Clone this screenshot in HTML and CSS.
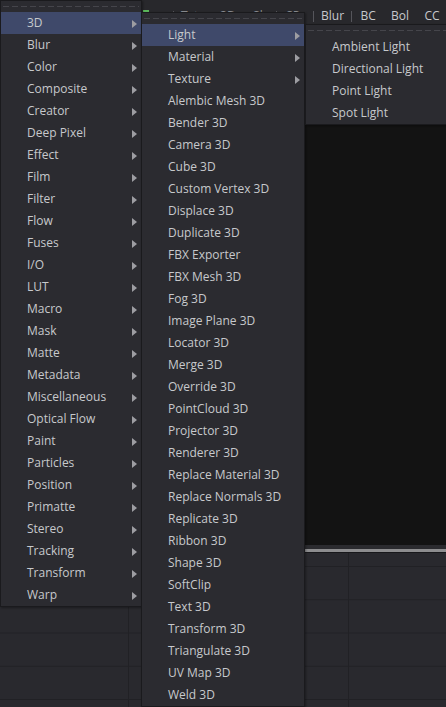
FILE: index.html
```html
<!DOCTYPE html>
<html lang="en">
<head>
<meta charset="utf-8">
<title>Fusion - Add Tool menu</title>
<link rel="stylesheet" href="styles.css">
</head>
<body>
<div class="app">
  <div class="toolbar">
    <div class="tb-hidden">
      <span class="tb-mark"></span>
      <span class="tb-sep"></span>
      <span class="tb-btn">Txt+</span>
      <span class="tb-btn">3D</span>
      <span class="tb-btn">Sh</span>
      <span class="tb-sep"></span>
      <span class="tb-btn">SP</span>
    </div>
    <span class="tb-sep"></span>
    <span class="tb-btn">Blur</span>
    <span class="tb-sep"></span>
    <span class="tb-btn">BC</span>
    <span class="tb-btn">Bol</span>
    <span class="tb-btn">CC</span>
  </div>
  <div class="viewer"></div>
  <div class="splitter"><div class="sp-a"></div><div class="sp-b"></div><div class="sp-c"></div></div>
  <div class="nodes"></div>
</div>

<div class="menu menu-main">
  <div class="tear"></div>
  <ul class="items">
    <li class="item active"><span class="label">3D</span><span class="arrow"></span></li>
    <li class="item"><span class="label">Blur</span><span class="arrow"></span></li>
    <li class="item"><span class="label">Color</span><span class="arrow"></span></li>
    <li class="item"><span class="label">Composite</span><span class="arrow"></span></li>
    <li class="item"><span class="label">Creator</span><span class="arrow"></span></li>
    <li class="item"><span class="label">Deep Pixel</span><span class="arrow"></span></li>
    <li class="item"><span class="label">Effect</span><span class="arrow"></span></li>
    <li class="item"><span class="label">Film</span><span class="arrow"></span></li>
    <li class="item"><span class="label">Filter</span><span class="arrow"></span></li>
    <li class="item"><span class="label">Flow</span><span class="arrow"></span></li>
    <li class="item"><span class="label">Fuses</span><span class="arrow"></span></li>
    <li class="item"><span class="label">I/O</span><span class="arrow"></span></li>
    <li class="item"><span class="label">LUT</span><span class="arrow"></span></li>
    <li class="item"><span class="label">Macro</span><span class="arrow"></span></li>
    <li class="item"><span class="label">Mask</span><span class="arrow"></span></li>
    <li class="item"><span class="label">Matte</span><span class="arrow"></span></li>
    <li class="item"><span class="label">Metadata</span><span class="arrow"></span></li>
    <li class="item"><span class="label">Miscellaneous</span><span class="arrow"></span></li>
    <li class="item"><span class="label">Optical Flow</span><span class="arrow"></span></li>
    <li class="item"><span class="label">Paint</span><span class="arrow"></span></li>
    <li class="item"><span class="label">Particles</span><span class="arrow"></span></li>
    <li class="item"><span class="label">Position</span><span class="arrow"></span></li>
    <li class="item"><span class="label">Primatte</span><span class="arrow"></span></li>
    <li class="item"><span class="label">Stereo</span><span class="arrow"></span></li>
    <li class="item"><span class="label">Tracking</span><span class="arrow"></span></li>
    <li class="item"><span class="label">Transform</span><span class="arrow"></span></li>
    <li class="item"><span class="label">Warp</span><span class="arrow"></span></li>
  </ul>
</div>

<div class="menu menu-3d">
  <div class="tear"></div>
  <ul class="items">
    <li class="item active"><span class="label">Light</span><span class="arrow"></span></li>
    <li class="item"><span class="label">Material</span><span class="arrow"></span></li>
    <li class="item"><span class="label">Texture</span><span class="arrow"></span></li>
    <li class="item"><span class="label">Alembic Mesh 3D</span></li>
    <li class="item"><span class="label">Bender 3D</span></li>
    <li class="item"><span class="label">Camera 3D</span></li>
    <li class="item"><span class="label">Cube 3D</span></li>
    <li class="item"><span class="label">Custom Vertex 3D</span></li>
    <li class="item"><span class="label">Displace 3D</span></li>
    <li class="item"><span class="label">Duplicate 3D</span></li>
    <li class="item"><span class="label">FBX Exporter</span></li>
    <li class="item"><span class="label">FBX Mesh 3D</span></li>
    <li class="item"><span class="label">Fog 3D</span></li>
    <li class="item"><span class="label">Image Plane 3D</span></li>
    <li class="item"><span class="label">Locator 3D</span></li>
    <li class="item"><span class="label">Merge 3D</span></li>
    <li class="item"><span class="label">Override 3D</span></li>
    <li class="item"><span class="label">PointCloud 3D</span></li>
    <li class="item"><span class="label">Projector 3D</span></li>
    <li class="item"><span class="label">Renderer 3D</span></li>
    <li class="item"><span class="label">Replace Material 3D</span></li>
    <li class="item"><span class="label">Replace Normals 3D</span></li>
    <li class="item"><span class="label">Replicate 3D</span></li>
    <li class="item"><span class="label">Ribbon 3D</span></li>
    <li class="item"><span class="label">Shape 3D</span></li>
    <li class="item"><span class="label">SoftClip</span></li>
    <li class="item"><span class="label">Text 3D</span></li>
    <li class="item"><span class="label">Transform 3D</span></li>
    <li class="item"><span class="label">Triangulate 3D</span></li>
    <li class="item"><span class="label">UV Map 3D</span></li>
    <li class="item"><span class="label">Weld 3D</span></li>
  </ul>
</div>

<div class="menu menu-light">
  <div class="tear"></div>
  <ul class="items">
    <li class="item"><span class="label">Ambient Light</span></li>
    <li class="item"><span class="label">Directional Light</span></li>
    <li class="item"><span class="label">Point Light</span></li>
    <li class="item"><span class="label">Spot Light</span></li>
  </ul>
</div>
</body>
</html>
```

FILE: styles.css
```css
* { box-sizing: border-box; }

html, body {
  margin: 0;
  padding: 0;
  width: 446px;
  height: 707px;
  overflow: hidden;
  background: #28282d;
  font-family: "Open Sans", "Noto Sans", sans-serif;
  font-size: 12px;
  color: #c7c9cc;
}

.app {
  display: flex;
  flex-direction: column;
  height: 707px;
}

/* ---- toolbar ---- */
.toolbar {
  height: 26px;
  flex: 0 0 26px;
  display: flex;
  align-items: flex-start;
  padding-top: 8px;
  background: #28282c;
  overflow: hidden;
  white-space: nowrap;
}

.tb-hidden {
  flex: 0 0 313px;
  min-width: 0;
  overflow: hidden;
  display: flex;
  align-items: flex-start;
  padding-left: 143px;
}

.tb-mark {
  flex: 0 0 6px;
  height: 2px;
  margin-top: 2px;
  margin-right: 24px;
  background: #5cb85c;
}

.tb-sep {
  flex: 0 0 1px;
  width: 1px;
  height: 11px;
  margin-top: 3px;
  background: #55555b;
}

.tb-btn {
  flex: 0 0 auto;
  min-width: 32px;
  padding: 0 7px;
  line-height: 16px;
  text-align: center;
  color: #c7c9cc;
}

.tb-hidden .tb-btn {
  color: #8a8c90;
}

.viewer {
  flex: 0 0 519px;
  background: #131313;
}

.splitter {
  flex: 0 0 8px;
  display: flex;
  flex-direction: column;
}
.sp-a { height: 4px; background: #2b2b2f; }
.sp-b { height: 3px; background: #8d8d8f; }
.sp-c { height: 1px; background: #18181b; }

.nodes {
  flex: 1 1 auto;
  background-color: #29292e;
  background-image:
    linear-gradient(to right, #212125 0, #212125 1px, transparent 1px),
    linear-gradient(to bottom, #212125 0, #212125 1px, transparent 1px);
  background-size: 55px 33.25px;
  background-position: 18px 13px;
}

/* ---- popup menus ---- */
.menu {
  position: absolute;
  background: #2b2b30;
  border: 1px solid #1a1a1d;
  box-shadow: 1px 1px 2px rgba(0, 0, 0, 0.35);
}

.menu-main  { left: 0;     top: 0;  width: 142px; }
.menu-3d    { left: 141px; top: 12px; width: 164px; }
.menu-light { left: 305px; top: 24px; width: 160px; }

.tear {
  height: 11px;
  padding-top: 5px;
}
.tear::before {
  content: "";
  display: block;
  height: 1px;
  margin: 0 2px;
  background: repeating-linear-gradient(to right, #45454b 0, #45454b 6px, transparent 6px, transparent 9px);
}

.items {
  list-style: none;
  margin: 0;
  padding: 0;
}

.item {
  height: 22px;
  display: flex;
  align-items: center;
  justify-content: space-between;
  padding: 0 4px 0 26px;
  line-height: 22px;
  white-space: nowrap;
}

.item.active {
  background: #3f496a;
}

.arrow {
  flex: 0 0 auto;
  width: 0;
  height: 0;
  margin-top: 1px;
  border-left: 5px solid #9d9da2;
  border-top: 4.5px solid transparent;
  border-bottom: 4.5px solid transparent;
}
```
